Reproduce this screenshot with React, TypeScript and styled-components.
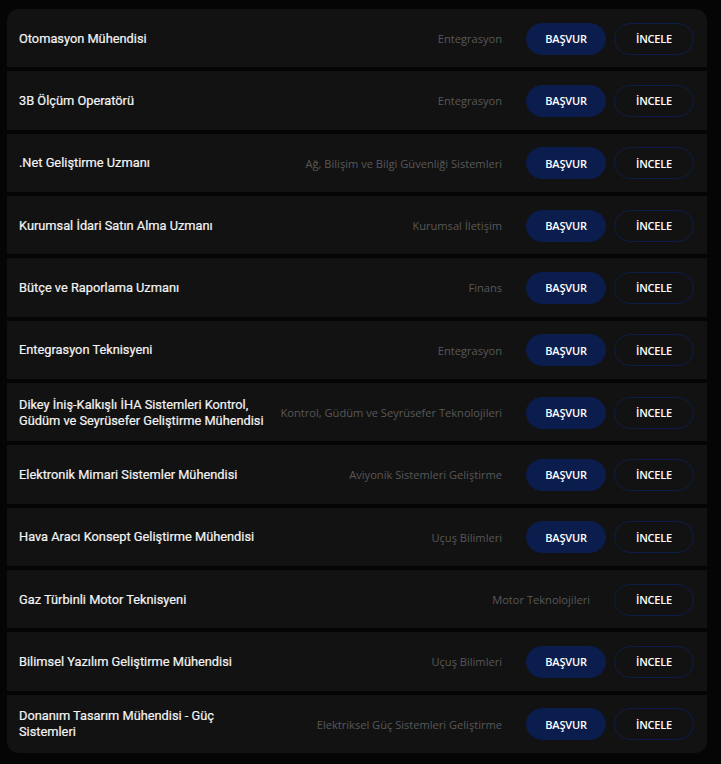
import styled, { createGlobalStyle } from 'styled-components';

const GlobalStyle = createGlobalStyle`
    html, body {
        margin: 0;
        padding: 0;
        background: #050505;
    }
`;

const Page = styled.div`
    padding: 9px 14px 11px 7px;
`;

const List = styled.ul`
    display: flex;
    flex-direction: column;
    gap: 4px;
    margin: 0;
    padding: 0;
    list-style: none;
    border-radius: 12px;
    overflow: hidden;
`;

const Row = styled.li`
    display: flex;
    align-items: center;
    height: 58.33px;
    padding: 1px 13px 0 12px;
    box-sizing: border-box;
    background: #121212;
`;

const Title = styled.span`
    flex: 1;
    max-width: 249px;
    margin-right: auto;
    font-family: Roboto, 'Liberation Sans', sans-serif;
    font-weight: 400;
    font-size: 12.8px;
    line-height: 16px;
    color: #f4f4f4;
    -webkit-text-stroke: 0.2px #f4f4f4;
`;

const Category = styled.span`
    margin-left: 16px;
    font-family: 'Open Sans', 'Liberation Sans', sans-serif;
    font-size: 11.1px;
    color: #585858;
    white-space: nowrap;
`;

const Actions = styled.div`
    display: flex;
    gap: 8px;
    margin-left: 24px;
`;

const Button = styled.button<{ $filled?: boolean }>`
    width: 80px;
    height: 32px;
    border-radius: 16px;
    border: 1px solid ${({ $filled }) => ($filled ? '#0b1d4d' : '#0d1d4a')};
    background: ${({ $filled }) => ($filled ? '#0b1d4d' : 'transparent')};
    color: #ffffff;
    font-family: 'Open Sans', 'Liberation Sans', sans-serif;
    font-weight: 600;
    font-size: 11px;
    letter-spacing: -0.2px;
    cursor: pointer;
`;

interface Job {
    title: string;
    category: string;
    canApply: boolean;
}

const jobs: Job[] = [
    { title: 'Otomasyon Mühendisi', category: 'Entegrasyon', canApply: true },
    { title: '3B Ölçüm Operatörü', category: 'Entegrasyon', canApply: true },
    { title: '.Net Geliştirme Uzmanı', category: 'Ağ, Bilişim ve Bilgi Güvenliği Sistemleri', canApply: true },
    { title: 'Kurumsal İdari Satın Alma Uzmanı', category: 'Kurumsal İletişim', canApply: true },
    { title: 'Bütçe ve Raporlama Uzmanı', category: 'Finans', canApply: true },
    { title: 'Entegrasyon Teknisyeni', category: 'Entegrasyon', canApply: true },
    {
        title: 'Dikey İniş-Kalkışlı İHA Sistemleri Kontrol, Güdüm ve Seyrüsefer Geliştirme Mühendisi',
        category: 'Kontrol, Güdüm ve Seyrüsefer Teknolojileri',
        canApply: true,
    },
    { title: 'Elektronik Mimari Sistemler Mühendisi', category: 'Aviyonik Sistemleri Geliştirme', canApply: true },
    { title: 'Hava Aracı Konsept Geliştirme Mühendisi', category: 'Uçuş Bilimleri', canApply: true },
    { title: 'Gaz Türbinli Motor Teknisyeni', category: 'Motor Teknolojileri', canApply: false },
    { title: 'Bilimsel Yazılım Geliştirme Mühendisi', category: 'Uçuş Bilimleri', canApply: true },
    { title: 'Donanım Tasarım Mühendisi - Güç Sistemleri', category: 'Elektriksel Güç Sistemleri Geliştirme', canApply: true },
];

export default function App() {
    return (
        <>
            <GlobalStyle />
            <Page>
                <List>
                    {jobs.map(job => (
                        <Row key={job.title}>
                            <Title>{job.title}</Title>
                            <Category>{job.category}</Category>
                            <Actions>
                                {job.canApply && <Button $filled>BAŞVUR</Button>}
                                <Button>İNCELE</Button>
                            </Actions>
                        </Row>
                    ))}
                </List>
            </Page>
        </>
    );
}
